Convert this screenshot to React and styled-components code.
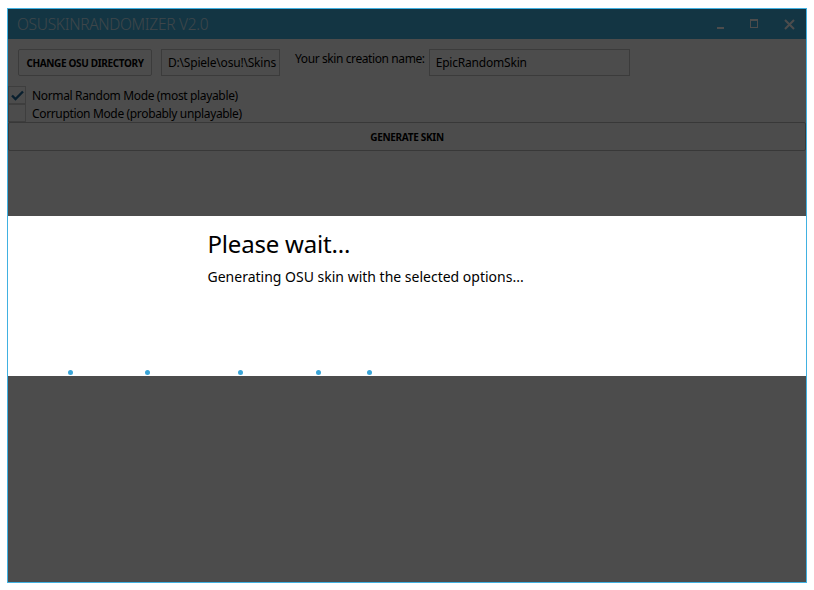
import React from "react";
import styled, { createGlobalStyle } from "styled-components";

const Global = createGlobalStyle`
  html, body { margin: 0; padding: 0; background: #ffffff; }
  body { font-family: "Noto Sans", "Open Sans", sans-serif; }
  * { box-sizing: border-box; }
`;

const Window = styled.div`
  position: relative;
  margin: 8px 0 0 7px;
  width: 800px;
  height: 575px;
  border: 1px solid #41b1e1;
  background: #ffffff;
  display: flex;
  flex-direction: column;
`;

const TitleBar = styled.div`
  height: 30px;
  flex: none;
  background: #41b1e1;
  display: flex;
  align-items: center;
  padding-left: 9px;
`;

const Title = styled.div`
  flex: 1;
  color: rgba(255, 255, 255, 0.75);
  font-size: 15.5px;
  font-weight: 300;
  letter-spacing: -0.3px;
`;

const WinButton = styled.div`
  width: 34px;
  height: 30px;
  display: flex;
  align-items: center;
  justify-content: center;
  color: #ffffff;
`;

const Content = styled.div`
  flex: 1;
  display: flex;
  flex-direction: column;
`;

const TopRow = styled.div`
  display: flex;
  align-items: center;
  padding: 10px 0 0 10px;
`;

const SquareButton = styled.button`
  height: 27px;
  width: ${(p) => p.$w || "auto"};
  margin-right: ${(p) => p.$mr || "0"};
  background: #ffffff;
  border: 1px solid #c6c6c6;
  border-radius: 2px;
  font-family: "Noto Sans", "Open Sans", sans-serif;
  font-weight: 700;
  font-size: 10px;
  color: #000;
  letter-spacing: -0.35px;
  padding: 0;
`;

const TextBox = styled.div`
  height: 27px;
  width: ${(p) => p.$w};
  border: 1px solid #c6c6c6;
  background: #fff;
  display: flex;
  align-items: center;
  padding-left: 6px;
  font-size: 12px;
  color: #000;
  letter-spacing: -0.2px;
  white-space: nowrap;
  overflow: hidden;
`;

const Label = styled.div`
  font-size: 12px;
  color: #000;
  letter-spacing: -0.4px;
  margin: 0 4px 8px 15px;
`;

const Checks = styled.div`
  display: flex;
  flex-direction: column;
  padding-top: 10px;
`;

const CheckRow = styled.div`
  display: flex;
  align-items: center;
  height: 18px;
`;

const Box = styled.div`
  width: 18px;
  height: 18px;
  border: 1px solid #d0d0d0;
  display: flex;
  align-items: center;
  justify-content: center;
  margin-right: 6px;
`;

const CheckText = styled.span`
  font-size: 12px;
  color: #000;
  letter-spacing: -0.35px;
`;

const WideButton = styled(SquareButton)`
  height: 29px;
  width: 100%;
  border-color: #bdbdbd;
  letter-spacing: -0.3px;
`;

const Overlay = styled.div`
  position: absolute;
  inset: 0;
  background: rgba(0, 0, 0, 0.7);
  display: flex;
  align-items: center;
`;

const Dialog = styled.div`
  position: relative;
  width: 100%;
  height: 160px;
  background: #ffffff;
  display: grid;
  grid-template-columns: 25% 50% 25%;
`;

const DialogBody = styled.div`
  grid-column: 2;
  padding-top: 11px;
`;

const DialogTitle = styled.div`
  font-size: 24px;
  line-height: 34px;
  color: #000;
  letter-spacing: -0.2px;
`;

const DialogMessage = styled.div`
  font-size: 14px;
  line-height: 20px;
  margin-top: 6px;
  color: #000;
  letter-spacing: 0;
`;

const Dot = styled.span`
  position: absolute;
  bottom: 1px;
  width: 5px;
  height: 5px;
  border-radius: 50%;
  background: #3aa5d8;
`;

const dots = [60, 137, 230, 308, 359];

export default function App() {
  return (
    <>
      <Global />
      <Window>
        <TitleBar>
          <Title>OSUSKINRANDOMIZER V2.0</Title>
          <WinButton>
            <svg width="10" height="10" viewBox="0 0 10 10">
              <rect x="1" y="8" width="7" height="2" fill="#fff" />
            </svg>
          </WinButton>
          <WinButton>
            <svg width="10" height="10" viewBox="0 0 10 10">
              <rect x="0.5" y="0.5" width="7" height="8" fill="none" stroke="#fff" />
              <rect x="0" y="0" width="8" height="2" fill="#fff" />
            </svg>
          </WinButton>
          <WinButton>
            <svg width="11" height="11" viewBox="0 0 11 11">
              <path d="M1 1 L10 10 M10 1 L1 10" stroke="#fff" strokeWidth="2" />
            </svg>
          </WinButton>
        </TitleBar>
        <Content>
          <TopRow>
            <SquareButton $w="134px" $mr="9px">CHANGE OSU DIRECTORY</SquareButton>
            <TextBox $w="119px">D:\Spiele\osu!\Skins</TextBox>
            <Label>Your skin creation name:</Label>
            <TextBox $w="201px">EpicRandomSkin</TextBox>
          </TopRow>
          <Checks>
            <CheckRow>
              <Box>
                <svg width="13" height="11" viewBox="0 0 13 11">
                  <path d="M1 5.5 L4.5 9 L12 1.5" fill="none" stroke="#1f6a9a" strokeWidth="2.4" />
                </svg>
              </Box>
              <CheckText>Normal Random Mode (most playable)</CheckText>
            </CheckRow>
            <CheckRow>
              <Box />
              <CheckText>Corruption Mode (probably unplayable)</CheckText>
            </CheckRow>
          </Checks>
          <WideButton>GENERATE SKIN</WideButton>
        </Content>
        <Overlay>
          <Dialog>
            <DialogBody>
              <DialogTitle>Please wait...</DialogTitle>
              <DialogMessage>Generating OSU skin with the selected options...</DialogMessage>
            </DialogBody>
            {dots.map((x) => (
              <Dot key={x} style={{ left: x }} />
            ))}
          </Dialog>
        </Overlay>
      </Window>
    </>
  );
}
